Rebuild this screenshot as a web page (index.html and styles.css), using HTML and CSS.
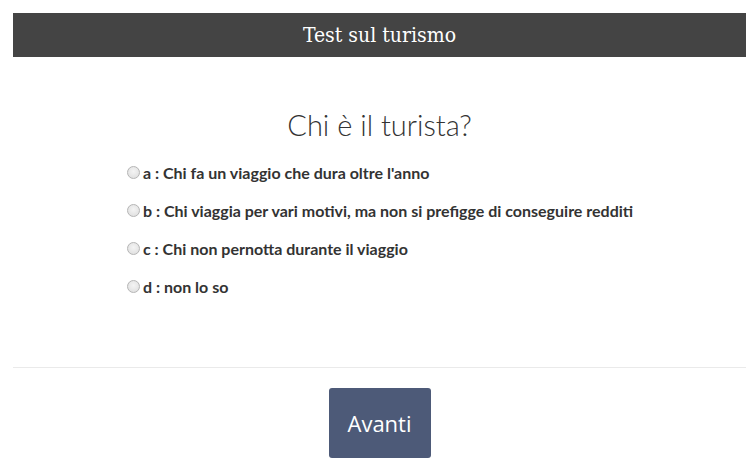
FILE: index.html
```html
<!DOCTYPE html>
<html lang="it">
<head>
<meta charset="utf-8">
<title>Test sul turismo</title>
<link rel="stylesheet" href="styles.css">
</head>
<body>
<div class="page">
  <header class="topbar">Test sul turismo</header>
  <main class="quiz">
    <h1 class="question">Chi è il turista?</h1>
    <form class="answers">
      <label class="answer"><input type="radio" name="r" class="radio"><span>a : Chi fa un viaggio che dura oltre l'anno</span></label>
      <label class="answer"><input type="radio" name="r" class="radio"><span>b : Chi viaggia per vari motivi, ma non si prefigge di conseguire redditi</span></label>
      <label class="answer"><input type="radio" name="r" class="radio"><span>c : Chi non pernotta durante il viaggio</span></label>
      <label class="answer"><input type="radio" name="r" class="radio"><span>d : non lo so</span></label>
    </form>
  </main>
  <hr class="divider">
  <div class="actions"><button class="next" type="button">Avanti</button></div>
</div>
</body>
</html>
```
FILE: styles.css
```css
html, body { margin: 0; padding: 0; background: #fff; }
.page { margin: 13px 8px 0 13px; }
.topbar {
  height: 44px;
  background: #444444;
  color: #fff;
  display: flex;
  align-items: center;
  justify-content: center;
  font-family: "DejaVu Serif Condensed", "DejaVu Serif", serif;
  font-size: 21px;
}
.quiz { padding: 0 0 0 114px; }
.question {
  margin: 51px 0 0 -114px;
  text-align: center;
  font-family: Lato, sans-serif;
  font-weight: 300;
  font-size: 29px;
  line-height: 34px;
  color: #333;
}
.answers { display: flex; flex-direction: column; gap: 20px; margin-top: 21px; }
.answer {
  display: flex;
  align-items: center;
  height: 18px;
  font-family: Lato, sans-serif;
  font-weight: 700;
  font-size: 16px;
  color: #333;
}
.radio {
  appearance: none;
  -webkit-appearance: none;
  width: 13px; height: 13px;
  margin: 0 3px 0 0;
  border-radius: 50%;
  border: 1px solid #b5b5b5;
  background: radial-gradient(circle at 50% 40%, #f4f4f4 0%, #dcdcdc 100%);
  box-sizing: border-box;
}
.divider { border: 0; border-top: 1px solid #eaeaea; margin: 72px 0 0 0; }
.actions { display: flex; justify-content: center; padding-top: 20px; }
.next {
  width: 102px; height: 70px;
  border: 0;
  border-radius: 3px;
  background: #4d5a78;
  color: #fff;
  font-family: "Open Sans", sans-serif;
  font-size: 22px;
}
```
